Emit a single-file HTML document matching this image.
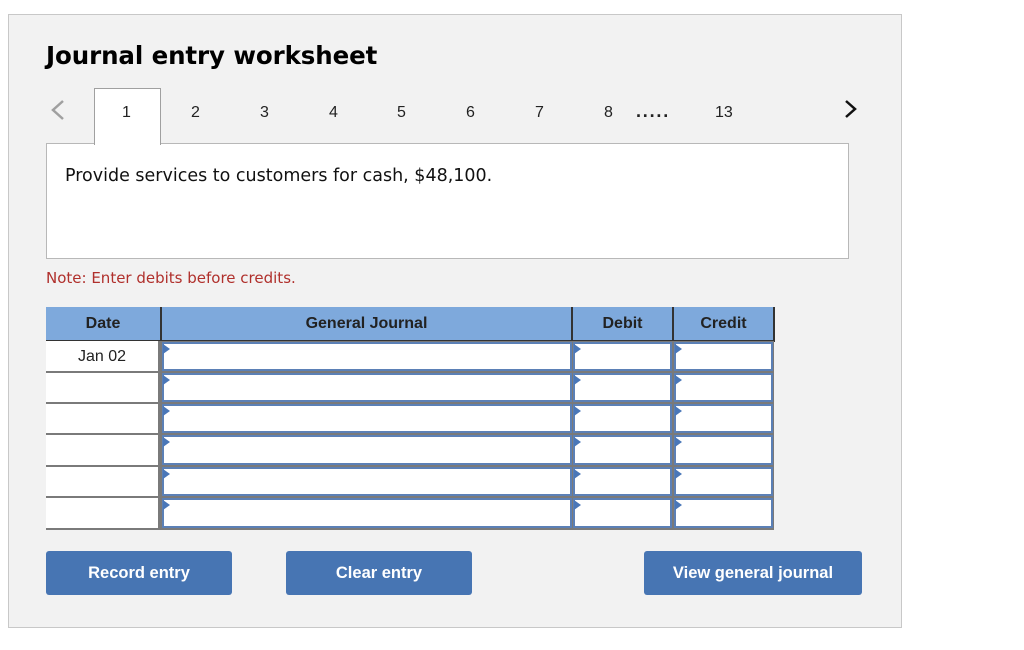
<!DOCTYPE html>
<html><head><meta charset="utf-8"><style>
*{margin:0;padding:0;box-sizing:border-box}
body{width:1024px;height:650px;background:#fff;position:relative;font-family:"DejaVu Sans","Liberation Sans",sans-serif;overflow:hidden}
.a{position:absolute}
.panel{left:8px;top:14px;width:894px;height:614px;background:#f2f2f2;border:1px solid #c8c8c8}
.title{left:46px;top:41px;font-size:24.5px;font-weight:bold;color:#000;letter-spacing:-0.1px}
.tab{left:94px;top:88px;width:67px;height:57px;background:#fff;border:1px solid #a0a0a0;border-bottom:none;z-index:2}
.box{left:46px;top:143px;width:803px;height:116px;background:#fff;border:1px solid #b8b8b8}
.n{top:104px;font-family:"Liberation Sans",sans-serif;font-size:16px;color:#222}
.txt{left:65px;top:166px;font-size:17.5px;color:#111}
.note{left:46px;top:269px;font-size:15px;color:#b0302c}
.hd{top:307px;height:35px;background:#7ea9dc;border-right:2px solid #333;border-bottom:2px solid #333;font-family:"Liberation Sans",sans-serif;font-weight:bold;font-size:16px;color:#222;text-align:center;line-height:33px}
.dc{left:46px;width:115px;background:#fff;border-bottom:2px solid #7a7a7a;border-right:3px solid #7a7a7a;font-family:"Liberation Sans",sans-serif;font-size:16px;color:#222;text-align:center;line-height:32px}
.in{background:#fff;border:2px solid #5b80b6}
.in:before{content:"";position:absolute;left:-1px;top:0;border-left:7px solid #4a77b8;border-top:5px solid transparent;border-bottom:5px solid transparent}
.btn{top:551px;height:44px;background:#4775b3;border-radius:3px;color:#fff;font-family:"Liberation Sans",sans-serif;font-weight:bold;font-size:16.5px;text-align:center;line-height:44px}
</style></head><body>
<div class="a panel"></div>
<div class="a title">Journal entry worksheet</div>
<svg class="a" style="left:50px;top:99px" width="16" height="24"><polyline points="13,2 3,11 13,20" fill="none" stroke="#a0a0a0" stroke-width="2.5"/></svg>
<svg class="a" style="left:843px;top:99px" width="16" height="24"><polyline points="3,2 12,10 3,18" fill="none" stroke="#111" stroke-width="2.5"/></svg>
<div class="a box"></div>
<div class="a tab"></div>
<div class="a n" style="left:122px;z-index:3">1</div>
<div class="a n" style="left:191px">2</div>
<div class="a n" style="left:260px">3</div>
<div class="a n" style="left:329px">4</div>
<div class="a n" style="left:397px">5</div>
<div class="a n" style="left:466px">6</div>
<div class="a n" style="left:535px">7</div>
<div class="a n" style="left:604px">8</div>
<div class="a n" style="left:636px;font-weight:bold;font-size:18px;letter-spacing:1.8px;top:101px">.....</div>
<div class="a n" style="left:715px">13</div>
<div class="a txt">Provide services to customers for cash, $48,100.</div>
<div class="a note">Note: Enter debits before credits.</div>
<div class="a hd" style="left:46px;width:116px">Date</div>
<div class="a hd" style="left:162px;width:411px">General Journal</div>
<div class="a hd" style="left:573px;width:101px">Debit</div>
<div class="a hd" style="left:674px;width:101px">Credit</div>
<div class="a" style="left:160px;top:341px;width:614px;height:189px;background:#7a7a7a"></div>
<div class="a dc" style="top:341px;height:32px">Jan 02</div>
<div class="a dc" style="top:373px;height:31px"></div>
<div class="a dc" style="top:404px;height:31px"></div>
<div class="a dc" style="top:435px;height:32px"></div>
<div class="a dc" style="top:467px;height:31px"></div>
<div class="a dc" style="top:498px;height:32px"></div>
<div class="a in" style="left:162px;top:342px;width:410px;height:29px"></div>
<div class="a in" style="left:573px;top:342px;width:99px;height:29px"></div>
<div class="a in" style="left:674px;top:342px;width:99px;height:29px"></div>
<div class="a in" style="left:162px;top:373px;width:410px;height:29px"></div>
<div class="a in" style="left:573px;top:373px;width:99px;height:29px"></div>
<div class="a in" style="left:674px;top:373px;width:99px;height:29px"></div>
<div class="a in" style="left:162px;top:404px;width:410px;height:29px"></div>
<div class="a in" style="left:573px;top:404px;width:99px;height:29px"></div>
<div class="a in" style="left:674px;top:404px;width:99px;height:29px"></div>
<div class="a in" style="left:162px;top:435px;width:410px;height:30px"></div>
<div class="a in" style="left:573px;top:435px;width:99px;height:30px"></div>
<div class="a in" style="left:674px;top:435px;width:99px;height:30px"></div>
<div class="a in" style="left:162px;top:467px;width:410px;height:29px"></div>
<div class="a in" style="left:573px;top:467px;width:99px;height:29px"></div>
<div class="a in" style="left:674px;top:467px;width:99px;height:29px"></div>
<div class="a in" style="left:162px;top:498px;width:410px;height:30px"></div>
<div class="a in" style="left:573px;top:498px;width:99px;height:30px"></div>
<div class="a in" style="left:674px;top:498px;width:99px;height:30px"></div>
<div class="a btn" style="left:46px;width:186px">Record entry</div>
<div class="a btn" style="left:286px;width:186px">Clear entry</div>
<div class="a btn" style="left:644px;width:218px">View general journal</div>
</body></html>
